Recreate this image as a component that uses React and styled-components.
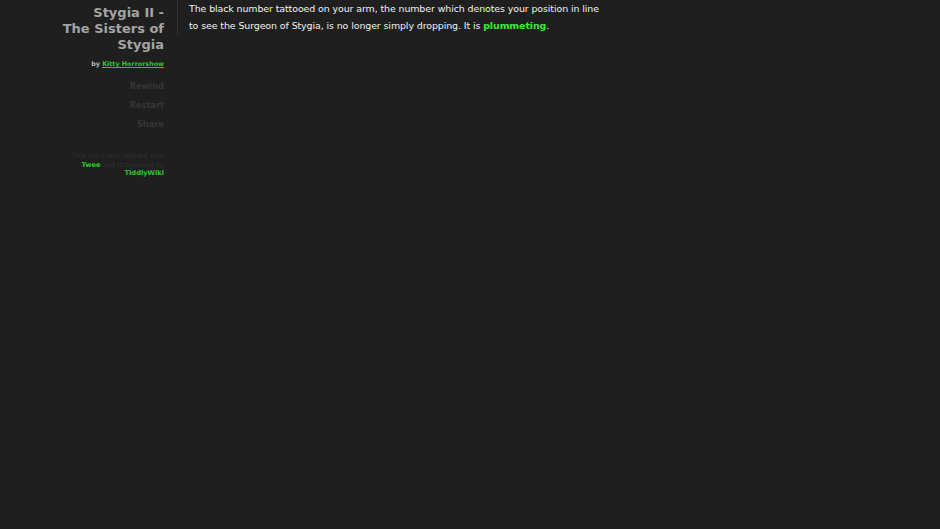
import styled, { createGlobalStyle } from "styled-components";

const Global = createGlobalStyle`
  html, body {
    margin: 0;
    padding: 0;
    background-color: #1f1f1f;
    font-family: Verdana, "DejaVu Sans", sans-serif;
  }
`;

const Page = styled.div`
  display: flex;
  align-items: flex-start;
  min-height: 529px;
  background-color: #1f1f1f;
`;

const Sidebar = styled.div`
  width: 164px;
  flex-shrink: 0;
  text-align: right;
  padding-top: 5px;
`;

const Title = styled.h1`
  margin: 0;
  font-size: 13px;
  line-height: 16px;
  font-weight: bold;
  color: #a4a4a4;
`;

const Byline = styled.div`
  margin-top: 7px;
  font-size: 6.4px;
  font-weight: bold;
  color: #bbb;
`;

const Link = styled.a`
  color: ${(p) => (p.$bright ? "#33ee33" : "#2dc82d")};
  font-weight: bold;
  text-decoration: ${(p) => (p.$underline ? "underline" : "none")};
`;

const Menu = styled.ul`
  list-style: none;
  margin: 9px 0 0;
  padding: 0;
`;

const MenuItem = styled.li`
  font-size: 8.3px;
  font-weight: bold;
  line-height: 19px;
  color: #363636;
`;

const Credits = styled.div`
  margin: 18px 0 0 auto;
  width: 96px;
  font-size: 6.7px;
  line-height: 8.5px;
  color: #333;
`;

const Passage = styled.div`
  margin-left: 13px;
  border-left: 1px solid #333;
  padding: 0 0 0 11px;
  width: 414px;
  font-size: 9.45px;
  letter-spacing: -0.1px;
  line-height: 17px;
  color: #f2f2f2;
`;

const Text = styled.p`
  margin: 0;
`;

export default function App() {
  return (
    <>
      <Global />
      <Page>
        <Sidebar>
          <Title>
            Stygia II -<br />
            The Sisters of
            <br />
            Stygia
          </Title>
          <Byline>
            by <Link $underline>Kitty Horrorshow</Link>
          </Byline>
          <Menu>
            <MenuItem>Rewind</MenuItem>
            <MenuItem>Restart</MenuItem>
            <MenuItem>Share</MenuItem>
          </Menu>
          <Credits>
            This story was created with <Link>Twee</Link> and is powered by{" "}
            <Link>TiddlyWiki</Link>
          </Credits>
        </Sidebar>
        <Passage>
          <Text>
            The black number tattooed on your arm, the number which denotes
            your position in line to see the Surgeon of Stygia, is no longer
            simply dropping. It is <Link $bright>plummeting</Link>.
          </Text>
        </Passage>
      </Page>
    </>
  );
}
